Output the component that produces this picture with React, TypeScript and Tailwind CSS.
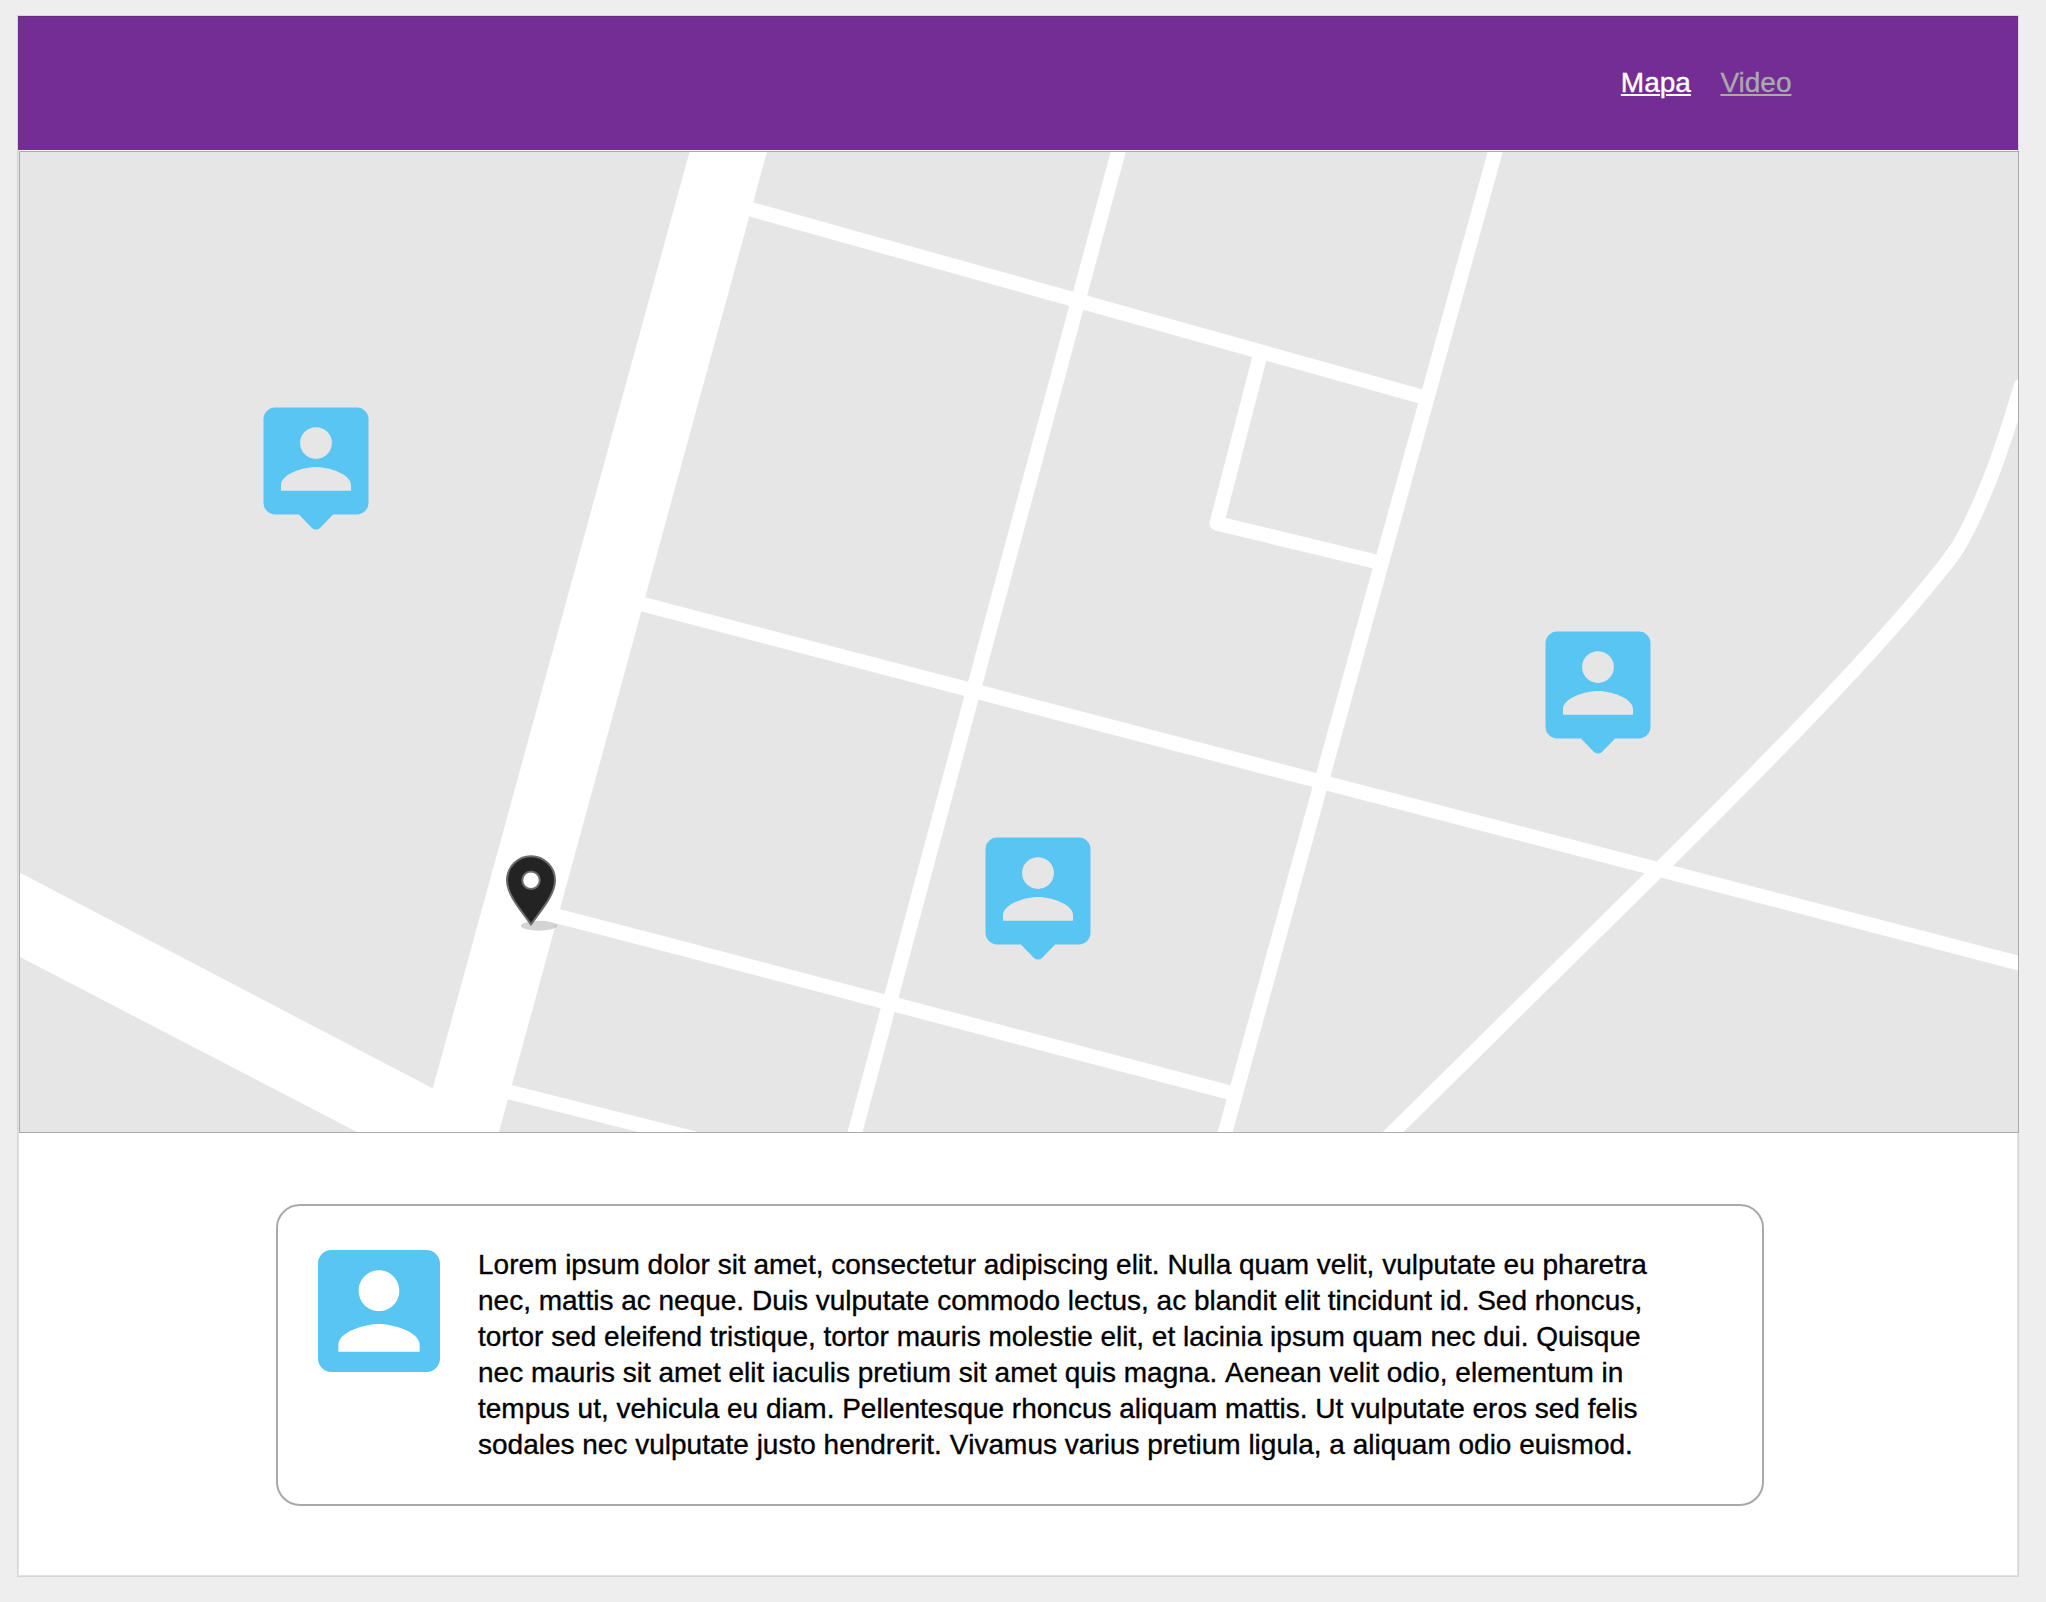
type MarkerProps = { x: number; y: number };

const markers: MarkerProps[] = [
  { x: 263.5, y: 407.5 },
  { x: 1545.5, y: 631.5 },
  { x: 985.5, y: 837.5 },
];

const lines = [
  "Lorem ipsum dolor sit amet, consectetur adipiscing elit. Nulla quam velit, vulputate eu pharetra",
  "nec, mattis ac neque. Duis vulputate commodo lectus, ac blandit elit tincidunt id. Sed rhoncus,",
  "tortor sed eleifend tristique, tortor mauris molestie elit, et lacinia ipsum quam nec dui. Quisque",
  "nec mauris sit amet elit iaculis pretium sit amet quis magna. Aenean velit odio, elementum in",
  "tempus ut, vehicula eu diam. Pellentesque rhoncus aliquam mattis. Ut vulputate eros sed felis",
  "sodales nec vulputate justo hendrerit. Vivamus varius pretium ligula, a aliquam odio euismod.",
];

function PersonMarker({ x, y }: MarkerProps) {
  return (
    <g transform={`translate(${x} ${y})`}>
      <path
        fill="#58c5f3"
        fillRule="evenodd"
        d="M11.7 0H93.3A11.7 11.7 0 0 1 105 11.7V95.3A11.7 11.7 0 0 1 93.3 107H69.6L56.5 120.4Q52.5 123.4 48.5 120.4L35.4 107H11.7A11.7 11.7 0 0 1 0 95.3V11.7A11.7 11.7 0 0 1 11.7 0Z
           M52.5 19.7A15.9 15.9 0 1 0 52.5 51.5A15.9 15.9 0 1 0 52.5 19.7Z
           M17.5 83.3H87.5V77.8C87.5 66 64.2 59.6 52.5 59.6S17.5 66 17.5 77.8Z"
      />
    </g>
  );
}

function CityMap() {
  return (
    <svg className="block h-full w-full" viewBox="20 152 1998 980" preserveAspectRatio="none">
      <rect x="20" y="152" width="1998" height="980" fill="#e6e6e6" />
      <g fill="#fff">
        <path d="M689.5 152H766.9L499 1132H420.8Z" />
        <path d="M20 872.7L433 1088.6L470 1132H357L20 957Z" />
      </g>
      <g fill="none" stroke="#fff" strokeWidth="14.6" strokeLinecap="round" strokeLinejoin="round">
        <path d="M740 206.2L1426.5 398" />
        <path d="M1120.4 144L1118.2 152L997.6 600L853.7 1137" />
        <path d="M1497.4 144L1495.2 152L1371.4 600L1223 1140" />
        <path d="M1261 352L1216.8 523.3L1381.5 563" />
        <path d="M630 600.9L1328.8 783.7L2026 965" />
        <path d="M545 912.9L680 947.9L1235 1094" />
        <path d="M495 1088.5L509 1091.9L700 1140" />
        <path d="M1383 1142L1393.2 1132L1667.6 861C1765 764.7 1856 671 1916.3 600C1938 574 1951 559 1960 543.5C1968 530 1978 508 1985 491C1996 466 2006 436 2021 386" />
      </g>
      {markers.map((m) => (
        <PersonMarker key={m.x} x={m.x} y={m.y} />
      ))}
      <ellipse cx="539" cy="925.7" rx="18" ry="5" fill="#000" fillOpacity="0.17" />
      <path
        fill="#232323"
        stroke="#6a6a6a"
        strokeWidth="2"
        d="M531 924.3C519 908 507 894 507 880.3A24 24 0 0 1 555 880.3C555 894 543 908 531 924.3Z"
      />
      <circle cx="531" cy="880.3" r="8.8" fill="#fff" stroke="#6a6a6a" strokeWidth="2" />
    </svg>
  );
}

export default function App() {
  return (
    <div className="h-[1602px] w-[2046px] overflow-hidden bg-[#eeeeee] pt-[15px] pl-[17px] font-['Liberation_Sans',Arial,sans-serif] text-[28px] leading-[36px] [-webkit-text-stroke:0.35px_currentColor]">
      <div className="flex h-[1562px] w-[2002px] flex-col border border-[#d6d6d6] bg-white">
        <header className="flex h-[134px] shrink-0 justify-end gap-[29.5px] border-t border-[#65297f] bg-[#732d94] pt-[48px] pr-[226.5px]">
          <a className="text-white underline decoration-2 underline-offset-[2px]">Mapa</a>
          <a className="text-[#aaaaaa] underline decoration-2 underline-offset-[2px]">Video</a>
        </header>
        <div className="flex grow flex-col border-x border-b border-[#e2e2e2] pt-px">
          <div className="-mr-[2px] h-[982px] shrink-0 border border-[#aaaaaa]">
            <CityMap />
          </div>
          <section className="mt-[71px] ml-[257px] flex h-[302px] w-[1488px] rounded-[24px] border-2 border-[#a9a9a9] pt-[44px] pl-[40px]">
            <svg className="size-[122px] shrink-0" viewBox="3 3 18 18" fill="#58c5f3">
              <path d="M3 5v14c0 1.1.89 2 2 2h14c1.1 0 2-.9 2-2V5c0-1.1-.9-2-2-2H5c-1.11 0-2 .9-2 2zm12 4c0 1.66-1.34 3-3 3s-3-1.34-3-3 1.34-3 3-3 3 1.34 3 3zm-9 8c0-2 4-3.1 6-3.1s6 1.1 6 3.1v1H6v-1z" />
            </svg>
            <p className="-mt-[3px] ml-[38px] text-black [font-kerning:none]">
              {lines.map((line) => (
                <span key={line} className="block whitespace-nowrap">
                  {line}
                </span>
              ))}
            </p>
          </section>
        </div>
      </div>
    </div>
  );
}
